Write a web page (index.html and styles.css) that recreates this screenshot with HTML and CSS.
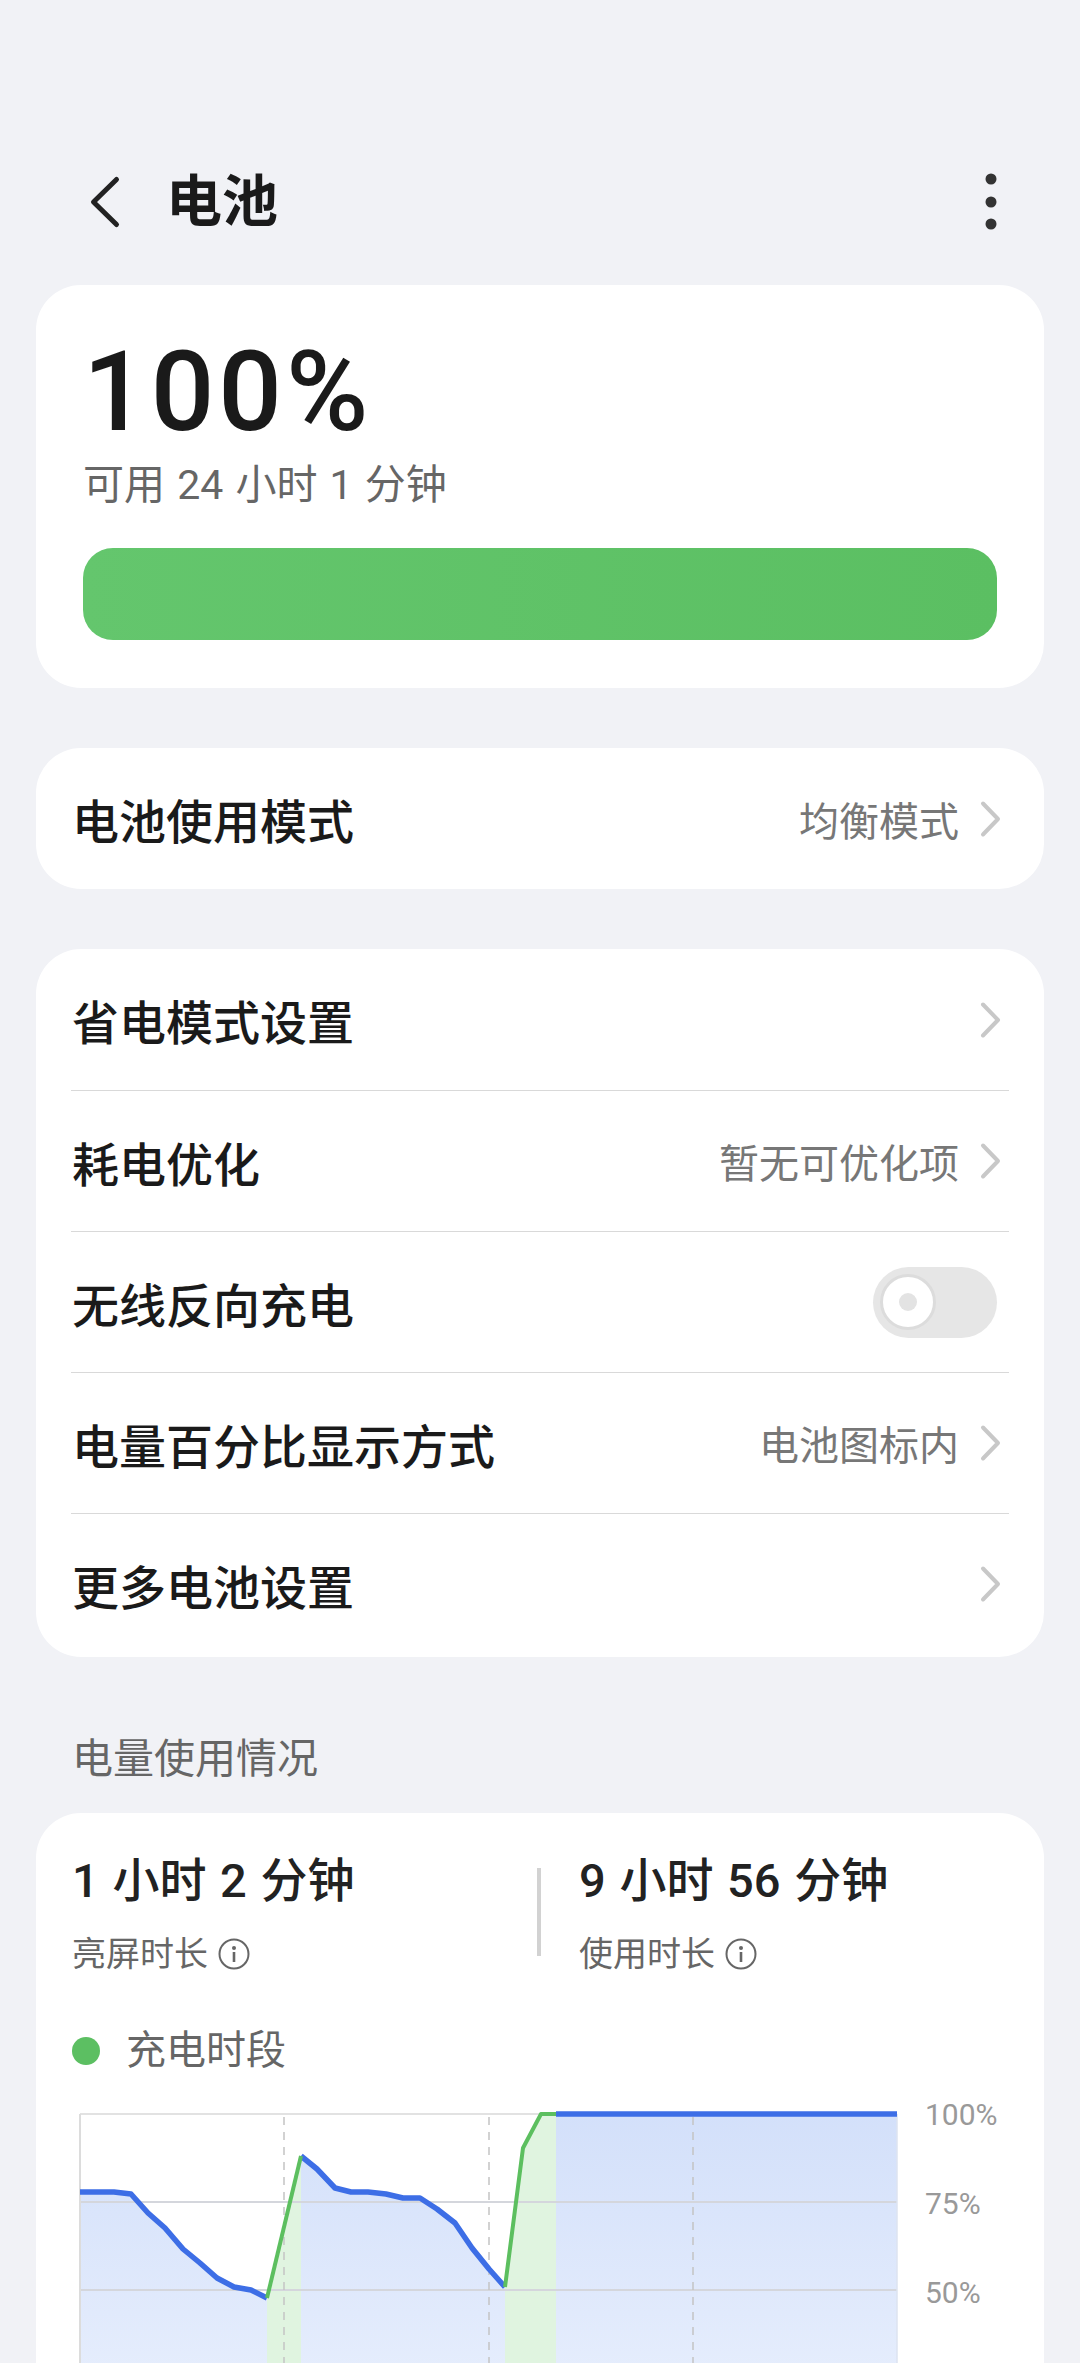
FILE: index.html
```html
<!DOCTYPE html>
<html lang="zh-CN">

<head>
    <meta charset="UTF-8">
    <meta name="viewport" content="width=device-width, initial-scale=1.0">
    <title>电池</title>
    <link rel="stylesheet" href="styles.css">
</head>

<body>
    <div class="header">
        <svg class="back" width="40" height="56" viewBox="0 0 40 56">
            <path d="M32.5 5.5 L9.5 28 L32.5 50.5" fill="none" stroke="#222" stroke-width="5" stroke-linecap="round" stroke-linejoin="round" />
        </svg>
        <h1 class="title">电池</h1>
        <svg class="more" width="12" height="58" viewBox="0 0 12 58">
            <circle cx="6" cy="6" r="5.5" fill="#333" />
            <circle cx="6" cy="29" r="5.5" fill="#333" />
            <circle cx="6" cy="51" r="5.5" fill="#333" />
        </svg>
    </div>

    <div class="card level">
        <div class="percent">100%</div>
        <div class="remain">可用 24 小时 1 分钟</div>
        <div class="bar"></div>
    </div>

    <div class="card">
        <div class="row">
            <span class="label">电池使用模式</span>
            <span class="value">均衡模式</span>
            <svg class="arrow" width="22" height="40" viewBox="0 0 22 40">
                <path d="M3 4.5 L18 20 L3 35.5" fill="none" stroke="#c8c8c8" stroke-width="4" stroke-linecap="round" stroke-linejoin="round" />
            </svg>
        </div>
    </div>

    <div class="card list">
        <div class="row">
            <span class="label">省电模式设置</span>
            <svg class="arrow" width="22" height="40" viewBox="0 0 22 40">
                <path d="M3 4.5 L18 20 L3 35.5" fill="none" stroke="#c8c8c8" stroke-width="4" stroke-linecap="round" stroke-linejoin="round" />
            </svg>
        </div>
        <div class="row">
            <span class="label">耗电优化</span>
            <span class="value">暂无可优化项</span>
            <svg class="arrow" width="22" height="40" viewBox="0 0 22 40">
                <path d="M3 4.5 L18 20 L3 35.5" fill="none" stroke="#c8c8c8" stroke-width="4" stroke-linecap="round" stroke-linejoin="round" />
            </svg>
        </div>
        <div class="row">
            <span class="label">无线反向充电</span>
            <div class="switch">
                <div class="knob"><i></i></div>
            </div>
        </div>
        <div class="row">
            <span class="label">电量百分比显示方式</span>
            <span class="value">电池图标内</span>
            <svg class="arrow" width="22" height="40" viewBox="0 0 22 40">
                <path d="M3 4.5 L18 20 L3 35.5" fill="none" stroke="#c8c8c8" stroke-width="4" stroke-linecap="round" stroke-linejoin="round" />
            </svg>
        </div>
        <div class="row">
            <span class="label">更多电池设置</span>
            <svg class="arrow" width="22" height="40" viewBox="0 0 22 40">
                <path d="M3 4.5 L18 20 L3 35.5" fill="none" stroke="#c8c8c8" stroke-width="4" stroke-linecap="round" stroke-linejoin="round" />
            </svg>
        </div>
    </div>

    <div class="section-title">电量使用情况</div>

    <div class="card usage">
        <div class="stats">
            <div class="stat first">
                <div class="stat-num">1 小时 2 分钟</div>
                <div class="stat-name">亮屏时长
                    <svg class="info" width="32" height="32" viewBox="0 0 32 32">
                        <circle cx="16" cy="16" r="14.5" fill="none" stroke="#666" stroke-width="2" />
                        <circle cx="16" cy="10" r="2" fill="#666" />
                        <path d="M16 14 V24" stroke="#666" stroke-width="2.6" />
                    </svg>
                </div>
            </div>
            <div class="vline"></div>
            <div class="stat">
                <div class="stat-num">9 小时 56 分钟</div>
                <div class="stat-name">使用时长
                    <svg class="info" width="32" height="32" viewBox="0 0 32 32">
                        <circle cx="16" cy="16" r="14.5" fill="none" stroke="#666" stroke-width="2" />
                        <circle cx="16" cy="10" r="2" fill="#666" />
                        <path d="M16 14 V24" stroke="#666" stroke-width="2.6" />
                    </svg>
                </div>
            </div>
        </div>

        <div class="legend">
            <span class="dot"></span>
            <span>充电时段</span>
        </div>

        <svg class="chart" width="950" height="320" viewBox="0 0 950 320">
            <defs>
                <linearGradient id="blueFill" x1="0" y1="0" x2="0" y2="1">
                    <stop offset="0" stop-color="#d3e0fa" />
                    <stop offset="1" stop-color="#e8effd" />
                </linearGradient>
            </defs>
            <!-- area under the curve -->
            <polygon fill="url(#blueFill)" points="8,101 42,101 59,103 76,122 93,137 111,158 128,172 145,187 162,196 179,199 195,207 229,65 245,78 263,97 279,101 296,101 314,103 331,107 348,107 365,118 383,132 400,157 417,178 433,196 451,57 469,23 484,23 825,23 825,320 8,320" />
            <!-- charging periods -->
            <polygon fill="#e0f4e0" points="195,207 229,65 229,320 195,320" />
            <polygon fill="#e0f4e0" points="433,196 451,57 469,23 484,23 484,320 433,320" />

            <!-- grid -->
            <line x1="8" y1="23" x2="825" y2="23" stroke="#e2e2e2" stroke-width="2" />
            <line x1="8" y1="111" x2="825" y2="111" stroke="#d4d6dc" stroke-width="2" />
            <line x1="8" y1="199" x2="825" y2="199" stroke="#d4d6dc" stroke-width="2" />
            <line x1="8" y1="23" x2="8" y2="320" stroke="#dcdcdc" stroke-width="2" />
            <line x1="825" y1="23" x2="825" y2="320" stroke="#dde3f0" stroke-width="1.5" />
            <line x1="212" y1="26" x2="212" y2="320" stroke="#c4c4c4" stroke-width="1.5" stroke-dasharray="8 7" />
            <line x1="417" y1="26" x2="417" y2="320" stroke="#c4c4c4" stroke-width="1.5" stroke-dasharray="8 7" />
            <line x1="621" y1="26" x2="621" y2="320" stroke="#c4c4c4" stroke-width="1.5" stroke-dasharray="8 7" />

            <!-- level line -->
            <polyline fill="none" stroke="#3d6ee6" stroke-width="5.5" stroke-linejoin="round" points="8,101 42,101 59,103 76,122 93,137 111,158 128,172 145,187 162,196 179,199 195,207" />
            <polyline fill="none" stroke="#3d6ee6" stroke-width="5.5" stroke-linejoin="round" points="229,65 245,78 263,97 279,101 296,101 314,103 331,107 348,107 365,118 383,132 400,157 417,178 433,196" />
            <polyline fill="none" stroke="#3d6ee6" stroke-width="5.5" points="484,23 825,23" />
            <polyline fill="none" stroke="#5cbf5f" stroke-width="4" stroke-linejoin="round" points="195,207 229,65" />
            <polyline fill="none" stroke="#5cbf5f" stroke-width="4" stroke-linejoin="round" points="433,196 451,57 469,23 484,23" />

            <text class="axis" x="853" y="34">100%</text>
            <text class="axis" x="853" y="123">75%</text>
            <text class="axis" x="853" y="212">50%</text>
        </svg>
    </div>
</body>

</html>
```

FILE: styles.css
```css
body {
    margin: 0;
    background: #f1f2f6;
    font-family: Roboto, "Noto Sans CJK SC", sans-serif;
    color: #1a1a1a;
}

.header {
    display: flex;
    align-items: center;
    height: 120px;
    margin-top: 142px;
    padding: 0 83px 0 84px;
}

.header .title {
    flex: 1;
    margin: 0 0 0 42px;
    font-size: 56px;
    font-weight: 700;
    line-height: 60px;
}

.card {
    margin: 0 36px;
    background: #fff;
    border-radius: 45px;
}

.level {
    margin-top: 23px;
    padding: 52px 47px 48px;
}

.level .percent {
    font-size: 112px;
    font-weight: 500;
    line-height: 110px;
    letter-spacing: 4px;
    color: #1a1a1a;
}

.level .remain {
    margin-top: 10px;
    font-size: 41px;
    line-height: 56px;
    word-spacing: 2px;
    color: #666;
}

.level .bar {
    height: 92px;
    margin-top: 35px;
    border-radius: 30px;
    background: linear-gradient(90deg, #64c66d, #5bbf62);
}

.card + .card {
    margin-top: 60px;
}

.row {
    display: flex;
    align-items: center;
    height: 141px;
    padding: 0 42px 0 36px;
}

.row .label {
    flex: 1;
    font-size: 47px;
    font-weight: 500;
    color: #1a1a1a;
}

.row .value {
    font-size: 40px;
    color: #777;
    margin-right: 21px;
}

.list {
    padding: 0 35px 3px;
}

.list .row {
    padding: 0 7px 0 1px;
}

.list .row + .row {
    height: 140px;
    border-top: 1px solid #d9d9d9;
}

.switch {
    display: flex;
    align-items: center;
    width: 124px;
    height: 71px;
    margin-right: 5px;
    padding: 0 7px;
    box-sizing: border-box;
    border-radius: 36px;
    background: #e6e6e6;
}

.switch .knob {
    display: flex;
    align-items: center;
    justify-content: center;
    width: 56px;
    height: 56px;
    box-sizing: border-box;
    border: 3px solid #dcdcdc;
    border-radius: 50%;
    background: #fff;
}

.switch .knob i {
    width: 18px;
    height: 18px;
    border-radius: 50%;
    background: #e3e3e3;
}

.section-title {
    margin: 74px 0 26px;
    padding-left: 72px;
    font-size: 41px;
    line-height: 56px;
    color: #666;
}

.usage {
    padding: 38px 36px 0;
    border-radius: 45px 45px 0 0;
}

.stats {
    display: flex;
}

.stat.first {
    width: 465px;
}

.stat-num {
    font-size: 47px;
    font-weight: 500;
    line-height: 60px;
    word-spacing: 2px;
    color: #222;
}

.stat-name {
    display: flex;
    align-items: center;
    margin-top: 20px;
    font-size: 34px;
    line-height: 46px;
    color: #666;
}

.stat-name .info {
    margin-left: 10px;
}

.vline {
    width: 4px;
    height: 88px;
    margin: 17px 38px 0 0;
    background: #d2d2d2;
}

.legend {
    display: flex;
    align-items: center;
    margin-top: 46px;
    font-size: 40px;
    line-height: 56px;
    color: #666;
}

.legend .dot {
    width: 28px;
    height: 28px;
    margin-right: 26px;
    border-radius: 50%;
    background: #5cbf62;
}

.chart {
    display: block;
    margin: 12px 0 0 -36px;
    padding-left: 36px;
    overflow: visible;
}

.chart .axis {
    font-family: Roboto, sans-serif;
    font-size: 30px;
    fill: #999;
}
```
